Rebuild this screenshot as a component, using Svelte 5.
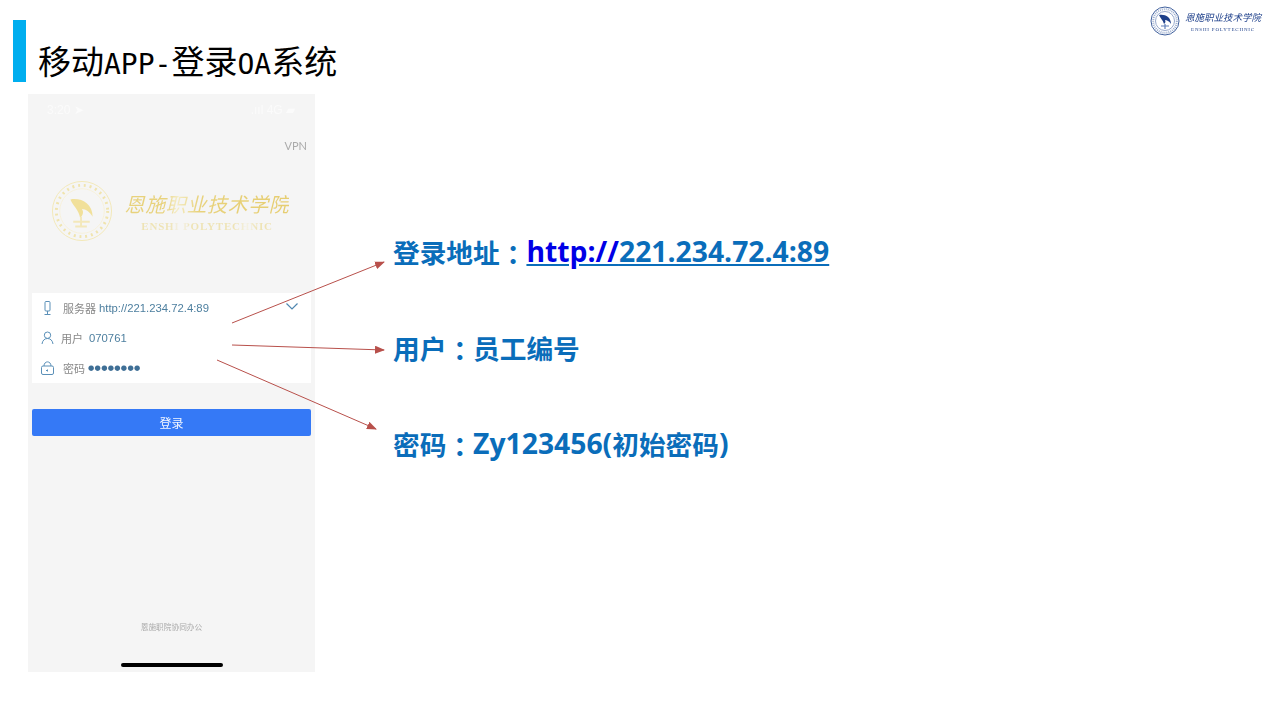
<script lang="ts">
const arrows = [
	{ x1: 232, y1: 323, x2: 384, y2: 262 },
	{ x1: 232, y1: 345, x2: 384, y2: 350 },
	{ x1: 217, y1: 360, x2: 376, y2: 429 }
];
</script>

<div class="slide">
	<header class="head">
		<div class="bar"></div>
		<h1 class="title">移动<span class="latin">APP-</span>登录<span class="latin">OA</span>系统</h1>
		<div class="brand">
			<svg class="seal" viewBox="0 0 30 30" aria-hidden="true">
				<circle cx="15" cy="15" r="14" fill="#fff" stroke="#3f5f9c" stroke-width="1" />
				<circle cx="15" cy="15" r="9.5" fill="none" stroke="#7d93bf" stroke-width="0.8" />
				<circle cx="15" cy="15" r="11.8" fill="none" stroke="#9fb0d0" stroke-width="2" stroke-dasharray="1 1" />
				<path d="M9 9c6-1 12 2 12 9-2-3-4-4-6-4 1 2 0 3-1 4-1-4-4-6-5-9z" fill="#1d3f8a" />
				<path d="M11 20h8M15 18v5" stroke="#5f7fb8" stroke-width="1.2" fill="none" />
			</svg>
			<div class="brand-text">
				<span class="brand-cn">恩施职业技术学院</span>
				<span class="brand-en">ENSHI POLYTECHNIC</span>
			</div>
		</div>
	</header>

	<main class="content">
		<section class="phone">
			<div class="status">
				<span>3:20 ➤</span>
				<span>.ııl 4G ▰</span>
			</div>
			<div class="vpn">VPN</div>
			<div class="logo">
				<svg class="emblem" viewBox="0 0 64 64" aria-hidden="true">
					<circle cx="32" cy="32" r="30.500" fill="none" stroke="#f3e8b8" stroke-width="1" />
					<circle cx="32" cy="32" r="23" fill="none" stroke="#f7f0d4" stroke-width="0.8" />
					<circle cx="32" cy="32" r="26.500" fill="none" stroke="#f0e4ae" stroke-width="3" stroke-dasharray="2 4" />
					<path d="M20 20c11-2 23 4 23 18-3-5-7-8-11-8 2 3 1 7-2 9-1-8-7-12-10-19z" fill="#f1e09a" />
					<path d="M23 43h17M31 38v10M25 48h12" stroke="#f3e8ba" stroke-width="2" fill="none" />
				</svg>
				<div class="logo-text">
					<span class="logo-cn">恩施职业技术学院</span>
					<span class="logo-en">ENSHI POLYTECHNIC</span>
				</div>
			</div>

			<div class="form">
				<div class="row server">
					<svg class="ico" viewBox="0 0 13 14" aria-hidden="true">
						<rect x="4" y="0.500" width="5" height="9.500" rx="1" />
						<path d="M6.500 10v3M3.500 13.500h6" />
					</svg>
					<span class="key">服务器</span>
					<span class="val">http://221.234.72.4:89</span>
					<svg class="chev" viewBox="0 0 12 7" aria-hidden="true"><path d="M0.500 0.500l5.500 5.500 5.500-5.500" /></svg>
				</div>
				<div class="row user">
					<svg class="ico" viewBox="0 0 13 14" aria-hidden="true">
						<circle cx="6.500" cy="4.200" r="3.200" />
						<path d="M1 13c.5-3.600 2.600-5.500 5.500-5.500s5 1.900 5.500 5.500" />
					</svg>
					<span class="key">用户</span>
					<span class="val">070761</span>
				</div>
				<div class="row pass">
					<svg class="ico" viewBox="0 0 13 14" aria-hidden="true">
						<rect x="0.500" y="5" width="12" height="8.500" rx="1.500" />
						<path d="M3 5c0-5.500 7-5.500 7 0M6.500 8.500v2M5 9.500h2" />
					</svg>
					<span class="key">密码</span>
					<span class="dots">●●●●●●●●</span>
				</div>
			</div>

			<button type="button" class="login">登录</button>
			<div class="foot">恩施职院协同办公</div>
			<div class="home"></div>
		</section>

		<section class="notes">
			<p class="note">登录地址<span class="colon">：</span><span class="num link"><span class="http">http://</span>221.234.72.4:89</span></p>
			<p class="note">用户<span class="colon">：</span>员工编号</p>
			<p class="note">密码<span class="colon">：</span><span class="num">Zy123456(</span>初始密码<span class="num">)</span></p>
		</section>
	</main>

	<svg class="arrows" viewBox="0 0 1280 720" aria-hidden="true">
		<defs>
			<marker id="tip" markerWidth="10" markerHeight="8" refX="9" refY="4" orient="auto" markerUnits="userSpaceOnUse">
				<path d="M0 0L10 4L0 8z" fill="#b8504b" />
			</marker>
		</defs>
		{#each arrows as a}
			<line x1={a.x1} y1={a.y1} x2={a.x2} y2={a.y2} stroke="#b8504b" stroke-width="1" marker-end="url(#tip)" />
		{/each}
	</svg>
</div>

<style>
:global(body) {
	margin: 0;
	background: #fff;
}

.slide {
	position: relative;
	display: flex;
	flex-direction: column;
	width: 1280px;
	height: 720px;
	overflow: hidden;
	font-family: "Noto Sans CJK SC", sans-serif;
	background: #fff;
}

.head {
	position: relative;
	display: flex;
	align-items: flex-end;
	height: 82px;
	padding-left: 13px;
}

.bar {
	width: 13px;
	height: 62px;
	background: #00aeef;
}

.title {
	margin: 0 0 0 12px;
	font-size: 33px;
	font-weight: 400;
	line-height: 40px;
	color: #000;
	white-space: nowrap;
	transform: translateY(3px);
}

.latin {
	font-family: "DejaVu Sans Mono", monospace;
	font-size: 28px;
}

.brand {
	position: absolute;
	top: 6px;
	left: 1150px;
	display: flex;
	gap: 5px;
	align-items: center;
	filter: blur(0.4px);
}

.seal {
	width: 30px;
	height: 30px;
}

.brand-text {
	display: flex;
	flex-direction: column;
	align-items: center;
	width: 76px;
	color: #1d3f8a;
}

.brand-cn {
	font-size: 9.500px;
	font-style: italic;
	line-height: 14px;
	white-space: nowrap;
}

.brand-en {
	margin-top: 2px;
	font-family: "Liberation Serif", serif;
	font-size: 5px;
	line-height: 7px;
	letter-spacing: 0.8px;
	white-space: nowrap;
}

.content {
	display: flex;
	margin-top: 12px;
	margin-left: 28px;
}

.phone {
	display: flex;
	flex-direction: column;
	flex-shrink: 0;
	box-sizing: border-box;
	width: 287px;
	height: 578px;
	background: #f5f5f5;
	filter: blur(0.4px);
}

.status {
	display: flex;
	justify-content: space-between;
	padding: 9px 20px 0 19px;
	font-family: "Liberation Sans", sans-serif;
	font-size: 12px;
	line-height: 14px;
	color: #fbfbfb;
}

.vpn {
	align-self: flex-end;
	margin-top: 22px;
	margin-right: 8px;
	font-family: Lato, sans-serif;
	font-size: 11px;
	line-height: 14px;
	color: #aaa;
}

.logo {
	display: flex;
	gap: 12px;
	align-items: center;
	height: 64px;
	margin-top: 26px;
	margin-left: 23px;
}

.emblem {
	width: 62px;
	height: 62px;
}

.logo-text {
	display: flex;
	flex-direction: column;
	align-items: center;
	width: 164px;
}

.logo-cn {
	font-size: 20px;
	font-style: italic;
	line-height: 30px;
	letter-spacing: 0.600px;
	color: transparent;
	white-space: nowrap;
	background: linear-gradient(90deg, #e8d27c 0 25%, #f4ecc4 32%, #e8d27c 45%, #e6cd70 100%);
	background-clip: text;
}

.logo-en {
	font-family: "Liberation Serif", serif;
	font-size: 11px;
	font-weight: 700;
	line-height: 14px;
	letter-spacing: 0.800px;
	color: transparent;
	white-space: nowrap;
	background: linear-gradient(90deg, #eee3b4 0 22%, #f4f4f4 30%, #eee3b4 38% 72%, #f4f2e6 80%, #eee3b4 88%);
	background-clip: text;
}

.form {
	box-sizing: border-box;
	height: 90px;
	margin: 50px 4px 0;
	background: #fff;
}

.row {
	display: flex;
	align-items: center;
	height: 30px;
	padding-left: 9px;
	font-size: 11px;
	line-height: 14px;
}

.ico {
	flex-shrink: 0;
	width: 13px;
	height: 14px;
	fill: none;
	stroke: #5b90b8;
	stroke-width: 1;
}

.key {
	margin-left: 9px;
	color: #888;
}

.user .key {
	margin-left: 7px;
}

.val {
	margin-left: 6px;
	font-family: "Liberation Sans", sans-serif;
	font-size: 11.300px;
	color: #4d7f9f;
}

.server .val {
	margin-left: 3px;
}

.dots {
	margin-left: 3px;
	font-family: "DejaVu Sans", sans-serif;
	font-size: 7.200px;
	letter-spacing: 0.300px;
	color: #3f6f96;
}

.chev {
	width: 12px;
	height: 7px;
	margin-top: -4px;
	margin-right: 13px;
	margin-left: auto;
	fill: none;
	stroke: #4f87b0;
	stroke-width: 1.200;
}

.login {
	height: 27px;
	margin: 26px 4px 0;
	padding: 0;
	font-family: inherit;
	font-size: 12px;
	color: #f2f6ff;
	background: #3579f6;
	border: 0;
	border-radius: 2px;
}

.foot {
	margin-top: auto;
	font-size: 7.700px;
	line-height: 12px;
	color: #aaa;
	text-align: center;
}

.home {
	align-self: center;
	width: 102px;
	height: 4px;
	margin-top: 30px;
	margin-bottom: 5px;
	background: #000;
	border-radius: 2px;
}

.notes {
	display: flex;
	flex-direction: column;
	margin-left: 78px;
	padding-top: 109px;
}

.note {
	display: flex;
	align-items: center;
	height: 96px;
	margin: 0;
	font-size: 26.700px;
	font-weight: 700;
	color: #0a6dba;
	white-space: nowrap;
}

.colon {
	padding-top: 4px;
	font-family: "Noto Sans CJK TC", sans-serif;
}

.num {
	font-family: "Open Sans", sans-serif;
	font-size: 28.300px;
}

.link {
	text-decoration: underline;
}

.http {
	color: #0000e6;
}

.arrows {
	position: absolute;
	top: 0;
	left: 0;
	width: 1280px;
	height: 720px;
	pointer-events: none;
}
</style>
